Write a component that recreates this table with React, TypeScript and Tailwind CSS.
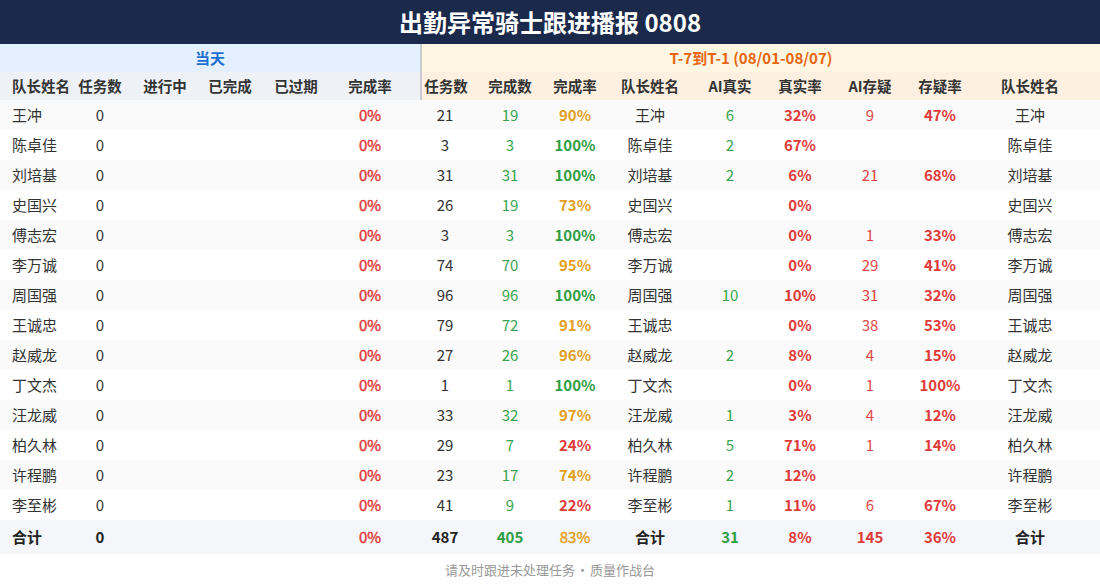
import React from 'react';

type Row = {
  name: string;
  tasks: number;
  done: number;
  rate: number;
  aiReal: number | null;
  realRate: number | null;
  aiDoubt: number | null;
  doubtRate: number | null;
};

const rows: Row[] = [
  { name: '王冲', tasks: 21, done: 19, rate: 90, aiReal: 6, realRate: 32, aiDoubt: 9, doubtRate: 47 },
  { name: '陈卓佳', tasks: 3, done: 3, rate: 100, aiReal: 2, realRate: 67, aiDoubt: null, doubtRate: null },
  { name: '刘培基', tasks: 31, done: 31, rate: 100, aiReal: 2, realRate: 6, aiDoubt: 21, doubtRate: 68 },
  { name: '史国兴', tasks: 26, done: 19, rate: 73, aiReal: null, realRate: 0, aiDoubt: null, doubtRate: null },
  { name: '傅志宏', tasks: 3, done: 3, rate: 100, aiReal: null, realRate: 0, aiDoubt: 1, doubtRate: 33 },
  { name: '李万诚', tasks: 74, done: 70, rate: 95, aiReal: null, realRate: 0, aiDoubt: 29, doubtRate: 41 },
  { name: '周国强', tasks: 96, done: 96, rate: 100, aiReal: 10, realRate: 10, aiDoubt: 31, doubtRate: 32 },
  { name: '王诚忠', tasks: 79, done: 72, rate: 91, aiReal: null, realRate: 0, aiDoubt: 38, doubtRate: 53 },
  { name: '赵威龙', tasks: 27, done: 26, rate: 96, aiReal: 2, realRate: 8, aiDoubt: 4, doubtRate: 15 },
  { name: '丁文杰', tasks: 1, done: 1, rate: 100, aiReal: null, realRate: 0, aiDoubt: 1, doubtRate: 100 },
  { name: '汪龙威', tasks: 33, done: 32, rate: 97, aiReal: 1, realRate: 3, aiDoubt: 4, doubtRate: 12 },
  { name: '柏久林', tasks: 29, done: 7, rate: 24, aiReal: 5, realRate: 71, aiDoubt: 1, doubtRate: 14 },
  { name: '许程鹏', tasks: 23, done: 17, rate: 74, aiReal: 2, realRate: 12, aiDoubt: null, doubtRate: null },
  { name: '李至彬', tasks: 41, done: 9, rate: 22, aiReal: 1, realRate: 11, aiDoubt: 6, doubtRate: 67 },
];

const grid =
  'grid grid-cols-[70px_60px_70px_60px_72px_88px_50px_80px_50px_100px_60px_80px_60px_80px_120px]';

const rateColor = (r: number) =>
  r >= 100 ? 'text-[#2f9e44]' : r >= 70 ? 'text-[#e3a01c]' : 'text-[#e03b3b]';

// medium weight: regular glyphs thickened a little
const medium = 'font-normal [-webkit-text-stroke:0.45px_currentColor]';

const headers = ['任务数', '进行中', '已完成', '已过期'];

export default function App() {
  return (
    <div
      className="w-[1100px] h-[586px] bg-white text-[#333] overflow-hidden"
      style={{ fontFamily: '"Noto Sans CJK SC", "Noto Sans", sans-serif' }}
    >
      <div className="h-[44px] bg-[#1b2a4b] flex items-center justify-center">
        <h1 className="text-white text-[24px] font-bold">出勤异常骑士跟进播报 0808</h1>
      </div>

      <div className="flex h-[28px] text-[15px] font-bold">
        <div className="w-[420px] bg-[#e4f0fd] text-[#1f6fd1] flex items-center justify-center">当天</div>
        <div className="flex-1 bg-[#fff6e1] border-l-2 border-[#c9ccd1] text-[#e8650f] flex items-center justify-center pr-5">
          T-7到T-1 (08/01-08/07)
        </div>
      </div>

      <div className={`${grid} h-[28px] text-[14.5px] font-bold text-[#333]`}>
        <div className="bg-[#eef1f6] flex items-center pl-3 whitespace-nowrap">队长姓名</div>
        {headers.map((h) => (
          <div key={h} className="bg-[#eef1f6] flex items-center justify-center">{h}</div>
        ))}
        <div className="bg-[#eef1f6] flex items-center justify-center pr-3">完成率</div>
        <div className="bg-[#fdf0e0] border-l-2 border-[#c9ccd1] flex items-center justify-center">任务数</div>
        <div className="bg-[#fdf0e0] flex items-center justify-center">完成数</div>
        <div className="bg-[#fdf0e0] flex items-center justify-center">完成率</div>
        <div className="bg-[#fdf0e0] flex items-center justify-center">队长姓名</div>
        <div className="bg-[#fdf0e0] flex items-center justify-center">AI真实</div>
        <div className="bg-[#fdf0e0] flex items-center justify-center">真实率</div>
        <div className="bg-[#fdf0e0] flex items-center justify-center">AI存疑</div>
        <div className="bg-[#fdf0e0] flex items-center justify-center">存疑率</div>
        <div className="bg-[#fdf0e0] flex items-center justify-center pr-5">队长姓名</div>
      </div>

      {rows.map((r, i) => (
        <div
          key={r.name}
          className={`${grid} h-[30px] text-[15px] items-center ${i % 2 === 0 ? 'bg-[#fafafa]' : 'bg-white'}`}
        >
          <div className="pl-3">{r.name}</div>
          <div className="text-center">0</div>
          <div />
          <div />
          <div />
          <div className={`text-center pr-3 text-[#e03b3b] ${medium}`}>0%</div>
          <div className="text-center">{r.tasks}</div>
          <div className="text-center text-[#3aa54f]">{r.done}</div>
          <div className={`text-center font-bold ${rateColor(r.rate)}`}>{r.rate}%</div>
          <div className="text-center">{r.name}</div>
          <div className="text-center text-[#3aa54f]">{r.aiReal ?? ''}</div>
          <div className="text-center font-bold text-[#e03b3b]">{r.realRate === null ? '' : `${r.realRate}%`}</div>
          <div className="text-center text-[#e04848]">{r.aiDoubt ?? ''}</div>
          <div className="text-center font-bold text-[#e03b3b]">{r.doubtRate === null ? '' : `${r.doubtRate}%`}</div>
          <div className="text-center pr-5">{r.name}</div>
        </div>
      ))}

      <div className={`${grid} h-[34px] text-[15px] items-center bg-[#f4f6fa] font-bold text-[#222]`}>
        <div className="pl-3">合计</div>
        <div className="text-center">0</div>
        <div />
        <div />
        <div />
        <div className={`text-center pr-3 text-[#e03b3b] ${medium}`}>0%</div>
        <div className="text-center">487</div>
        <div className="text-center text-[#2f9e44]">405</div>
        <div className={`text-center text-[#e3a01c] ${medium}`}>83%</div>
        <div className="text-center">合计</div>
        <div className="text-center text-[#2f9e44]">31</div>
        <div className="text-center text-[#e03b3b]">8%</div>
        <div className="text-center text-[#e03b3b]">145</div>
        <div className="text-center text-[#e03b3b]">36%</div>
        <div className="text-center pr-5">合计</div>
      </div>

      <div className="h-[32px] flex items-center justify-center text-[13px] text-[#999]">
        请及时跟进未处理任务<span className="mx-[1px]">·</span>质量作战台
      </div>
    </div>
  );
}
